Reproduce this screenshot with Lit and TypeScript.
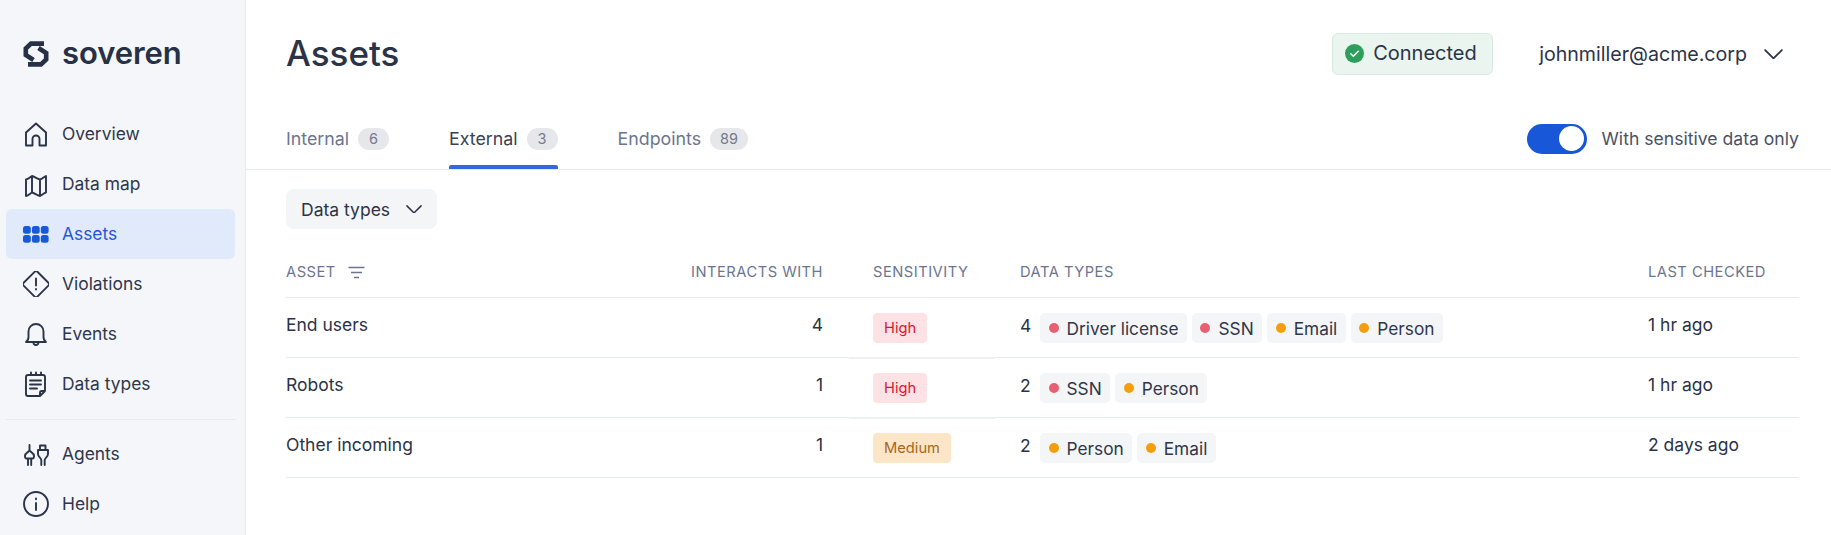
import { LitElement, html, css, svg } from 'lit'
import { customElement } from 'lit/decorators.js'

const navTop = [
    { label: 'Overview', icon: 'home' },
    { label: 'Data map', icon: 'map' },
    { label: 'Assets', icon: 'grid', active: true },
    { label: 'Violations', icon: 'alert' },
    { label: 'Events', icon: 'bell' },
    { label: 'Data types', icon: 'note' }
]
const navBottom = [
    { label: 'Agents', icon: 'plug' },
    { label: 'Help', icon: 'info' }
]

const tabs = [
    { label: 'Internal', count: 6 },
    { label: 'External', count: 3, active: true },
    { label: 'Endpoints', count: 89 }
]

const H = 'high'
const M = 'medium'
const rows = [
    {
        asset: 'End users',
        interacts: 4,
        level: H,
        count: 4,
        types: [['Driver license', H], ['SSN', H], ['Email', M], ['Person', M]],
        checked: '1 hr ago'
    },
    {
        asset: 'Robots',
        interacts: 1,
        level: H,
        count: 2,
        types: [['SSN', H], ['Person', M]],
        checked: '1 hr ago'
    },
    {
        asset: 'Other incoming',
        interacts: 1,
        level: M,
        count: 2,
        types: [['Person', M], ['Email', M]],
        checked: '2 days ago'
    }
]

const icons: Record<string, unknown> = {
    home: svg`<path d="M3 11.500 13 2.500l10 9V24.500h-6.500v-6.500a3.500 3.500 0 0 0-7 0v6.500H3z"/>`,
    map: svg`<path d="M3 8.500c2.500-.5 4-2.500 6-3.500 2 .5 5 2.500 8 3.500 2-.5 4-2.500 6-3.500v16.500c-2 .5-4 2.500-6 3.500-3-1-6-3-8-3.500-2 1-3.500 3-6 3.500zM9 5v16.500M17 8.500V25"/>`,
    grid: svg`<g fill="currentColor" stroke="none">
        <rect x="0" y="5" width="7.800" height="7.800" rx="2.500"/><rect x="8.900" y="5" width="7.800" height="7.800" rx="2.500"/><rect x="17.800" y="5" width="7.800" height="7.800" rx="2.500"/>
        <rect x="0" y="14" width="7.800" height="7.800" rx="2.500"/><rect x="8.900" y="14" width="7.800" height="7.800" rx="2.500"/><rect x="17.800" y="14" width="7.800" height="7.800" rx="2.500"/>
    </g>`,
    alert: svg`<path d="M11.600 0.800a2 2 0 0 1 2.800 0l11 11a2 2 0 0 1 0 2.800l-11 11a2 2 0 0 1-2.800 0l-11-11a2 2 0 0 1 0-2.800zM13 7.500v7M13 18v.5"/>`,
    bell: svg`<path d="M3 21c1.500-1 2.500-2.500 2.500-5v-5.500a7.500 7.500 0 0 1 15 0V16c0 2.500 1 4 2.500 5zM10.500 21.500a2.500 2.500 0 0 0 5 0"/>`,
    note: svg`<path d="M5 4h15a2 2 0 0 1 2 2v14l-5 5H5a2 2 0 0 1-2-2V6a2 2 0 0 1 2-2zM17 25v-3.500a1.500 1.500 0 0 1 1.500-1.500H22M8 1.500v2M13 1.500v2M18 1.500v2M7 9.500h11M7 13.500h11M7 17.500h7"/>`,
    plug: svg`<path d="M6.500 4v5c0 2-4.500 2.500-4.500 6 0 1 .5 2.500 1.500 2.500h6c1 0 1.500-1.500 1.500-2.500 0-3.500-4.500-4-4.500-6M5 17.500V24M8.200 17.500V24"/>
        <path d="M17 9V4.500h5.500V9M15 9h10v4c0 3-3.300 4-3.300 6v5M15 9v4c0 3 3.300 4 3.300 6v5"/>`,
    info: svg`<circle cx="13" cy="13" r="12"/><path d="M13 12v7M13 7.500v.7"/>`
}

@customElement('app-root')
export class AppRoot extends LitElement {
    static styles = css`
        :host {
            display: flex;
            width: 100%;
            height: 535px;
            overflow: hidden;
            background: #fff;
            color: #2b3347;
            font-family: Inter, 'Noto Sans', sans-serif;
            font-size: 17.500px;
        }

        .sidebar {
            flex: none;
            width: 246px;
            box-sizing: border-box;
            border-right: 1px solid #e8ebf0;
            background: #f5f6f9;
            padding: 41px 10px 0 6px;
        }

        .logo {
            display: flex;
            align-items: center;
            gap: 13px;
            height: 25px;
            padding-left: 17px;
            margin-bottom: 43px;
        }

        .logo svg {
            flex: none;
            display: block;
        }

        .logo span {
            margin-top: -2px;
            font-size: 31px;
            font-weight: 600;
            line-height: 25px;
            letter-spacing: -0.1px;
            color: #263145;
        }

        .nav {
            display: flex;
            flex-direction: column;
        }

        .nav-item {
            display: flex;
            align-items: center;
            gap: 13px;
            height: 50px;
            padding-left: 17px;
            border-radius: 6px;
            font-size: 17.400px;
            color: #2f374d;
        }

        .nav-item span {
            margin-bottom: 2px;
        }

        .nav-item svg {
            flex: none;
            width: 26px;
            height: 26px;
            fill: none;
            stroke: #2a3448;
            stroke-width: 1.900;
            stroke-linejoin: round;
            stroke-linecap: round;
        }

        .nav-item.active {
            background: #e1eafb;
            color: #2358d6;
        }

        .nav-item.active svg {
            color: #175ad8;
        }

        .divider {
            height: 1px;
            background: #e8eaef;
            margin: 10px -1px 9px 0;
        }

        .main {
            flex: 1;
            min-width: 0;
        }

        .head {
            display: flex;
            align-items: center;
            height: 108px;
            padding: 0 48px 0 40px;
        }

        h1 {
            margin: 0 0 2px;
            flex: 1;
            font-size: 35px;
            font-weight: 500;
            color: #2b3347;
        }

        .status {
            display: flex;
            align-items: center;
            gap: 9px;
            box-sizing: border-box;
            height: 42px;
            width: 161px;
            padding: 0 0 2px 12px;
            margin-right: 46px;
            background: #e9f5ee;
            border: 1px solid #d7ecdf;
            border-radius: 6px;
            font-size: 20px;
        }

        .user {
            display: flex;
            align-items: center;
            gap: 17px;
            font-size: 19.600px;
        }

        .tabbar {
            display: flex;
            align-items: stretch;
            height: 61px;
            padding: 0 32px 0 40px;
            border-bottom: 1px solid #e6e9f0;
        }

        .tab {
            position: relative;
            display: flex;
            align-items: center;
            gap: 9px;
            margin-right: 60px;
            color: #6b7590;
            font-size: 17.800px;
        }

        .tab.active {
            color: #394155;
        }

        .tab.active::after {
            content: '';
            position: absolute;
            left: 0;
            right: 0;
            bottom: 0;
            height: 4px;
            background: #2f6be0;
            border-radius: 2px 2px 0 0;
        }

        .count {
            display: flex;
            align-items: center;
            justify-content: center;
            box-sizing: border-box;
            min-width: 31px;
            height: 22px;
            padding: 0 10px;
            border-radius: 11px;
            background: #e6e7ea;
            color: #737a8c;
            font-size: 14.500px;
        }

        .sensitive {
            margin-left: auto;
            display: flex;
            align-items: center;
            gap: 15px;
            color: #4a5166;
            font-size: 17.600px;
        }

        .switch {
            box-sizing: border-box;
            display: flex;
            justify-content: flex-end;
            align-items: center;
            width: 60px;
            height: 30px;
            padding: 2.500px;
            border-radius: 15px;
            background: #1757d8;
        }

        .switch i {
            display: block;
            width: 25px;
            height: 25px;
            border-radius: 50%;
            background: #fff;
        }

        .content {
            padding: 19px 32px 0 40px;
        }

        .filter {
            display: flex;
            align-items: center;
            gap: 16px;
            width: fit-content;
            height: 40px;
            padding: 0 15px;
            border-radius: 8px;
            background: #f4f5f7;
            font-size: 17.500px;
        }

        .chevron {
            flex: none;
            fill: none;
            stroke: #2b3347;
            stroke-width: 1.700;
            stroke-linecap: round;
            stroke-linejoin: round;
        }

        .table {
            display: grid;
            grid-template-columns: 1fr 250px 147px 628px 151px;
            margin-top: 18px;
        }

        .th {
            display: flex;
            align-items: center;
            gap: 12px;
            height: 50px;
            border-bottom: 1px solid #e6ebf3;
            color: #6b7590;
            font-size: 14.700px;
            letter-spacing: 0.5px;
            text-transform: uppercase;
        }

        .td {
            position: relative;
            display: flex;
            align-items: flex-start;
            box-sizing: border-box;
            height: 60px;
            padding-top: 15px;
            border-bottom: 1px solid #e6ebf3;
            font-size: 17.500px;
        }

        .num {
            justify-content: flex-end;
            padding-right: 50px;
        }

        .th.num {
            padding-right: 50px;
        }

        .plain {
            line-height: 24px;
        }

        .level {
            display: flex;
            align-items: center;
            height: 30px;
            padding: 0 11px;
            border-radius: 4px;
            font-size: 14.700px;
        }

        .level.high {
            background: #fde2e5;
            color: #e1122f;
        }

        .level.medium {
            background: #fde6c8;
            color: #a8661c;
        }

        .seam::after {
            content: '';
            position: absolute;
            left: -24px;
            right: 25px;
            bottom: -2px;
            height: 2px;
            background: #eef1f4;
        }

        .types {
            display: flex;
            gap: 5px;
        }

        .types .total {
            width: 15px;
            line-height: 26px;
        }

        .chip {
            display: flex;
            align-items: center;
            gap: 8px;
            height: 30px;
            padding: 0 8.500px;
            border-radius: 5px;
            background: #f4f5f7;
            color: #30374b;
            font-size: 17.300px;
        }

        .dot {
            width: 10px;
            height: 10px;
            border-radius: 50%;
        }

        .dot.high {
            background: #e85f71;
        }

        .dot.medium {
            background: #f59e0b;
        }
    `

    renderChevron(size: number) {
        return html`<svg class="chevron" width="${size}" height="${size * 0.55}" viewBox="0 0 18 10"><path d="M1 1l8 8 8-8" /></svg>`
    }

    renderNavItem(item: { label: string; icon: string; active?: boolean }) {
        return html`
            <div class="nav-item ${item.active ? 'active' : ''}">
                <svg viewBox="0 0 26 26">${icons[item.icon]}</svg>
                <span>${item.label}</span>
            </div>
        `
    }

    render() {
        return html`
            <aside class="sidebar">
                <div class="logo">
                    <svg width="26" height="26" viewBox="0 0 26 26" fill="none" stroke="#263145" stroke-width="4.600" stroke-linejoin="miter">
                        <path d="M21 2.600H8L2.800 7.500V14l7.700 5" />
                        <path d="M5 23.400H18l5.200-4.900V12L15.500 7" />
                    </svg>
                    <span>soveren</span>
                </div>
                <nav class="nav">${navTop.map((item) => this.renderNavItem(item))}</nav>
                <div class="divider"></div>
                <nav class="nav">${navBottom.map((item) => this.renderNavItem(item))}</nav>
            </aside>
            <main class="main">
                <header class="head">
                    <h1>Assets</h1>
                    <div class="status">
                        <svg width="19" height="19" viewBox="0 0 19 19">
                            <circle cx="9.500" cy="9.500" r="9.500" fill="#2e9e5b" />
                            <path d="M5.800 9.800l2.500 2.500 5-5" fill="none" stroke="#fff" stroke-width="1.500" stroke-linecap="round" stroke-linejoin="round" />
                        </svg>
                        Connected
                    </div>
                    <div class="user">johnmiller@acme.corp ${this.renderChevron(19)}</div>
                </header>
                <div class="tabbar">
                    ${tabs.map(
                        (tab) => html`
                            <div class="tab ${tab.active ? 'active' : ''}">
                                ${tab.label}<span class="count">${tab.count}</span>
                            </div>
                        `
                    )}
                    <div class="sensitive">
                        <div class="switch"><i></i></div>
                        With sensitive data only
                    </div>
                </div>
                <div class="content">
                    <div class="filter">Data types ${this.renderChevron(16)}</div>
                    <div class="table">
                        <div class="th">
                            Asset
                            <svg width="17" height="13" viewBox="0 0 17 13" fill="none" stroke="#6b7590" stroke-width="1.300">
                                <path d="M0.500 1.500h16M3 6.500h11M6 11.500h5" />
                            </svg>
                        </div>
                        <div class="th num">Interacts with</div>
                        <div class="th">Sensitivity</div>
                        <div class="th">Data types</div>
                        <div class="th">Last checked</div>
                        ${rows.map(
                            (row, i) => html`
                                <div class="td plain">${row.asset}</div>
                                <div class="td num plain">${row.interacts}</div>
                                <div class="td ${i < 2 ? 'seam' : ''}">
                                    <span class="level ${row.level}">${row.level === H ? 'High' : 'Medium'}</span>
                                </div>
                                <div class="td types">
                                    <span class="total">${row.count}</span>
                                    ${row.types.map(
                                        ([name, level]) => html`
                                            <span class="chip"><span class="dot ${level}"></span>${name}</span>
                                        `
                                    )}
                                </div>
                                <div class="td plain">${row.checked}</div>
                            `
                        )}
                    </div>
                </div>
            </main>
        `
    }
}
